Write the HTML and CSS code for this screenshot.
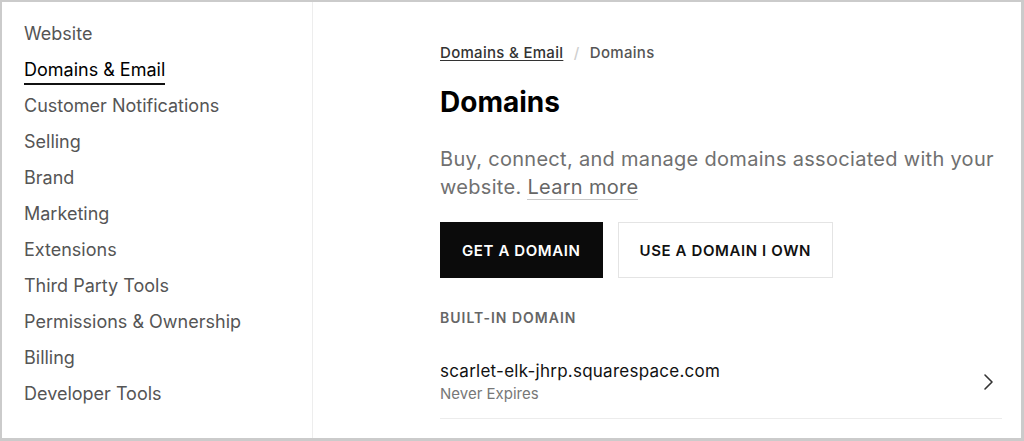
FILE: index.html
```html
<!DOCTYPE html>
<html lang="en">

<head>
  <meta charset="UTF-8" />
  <title>Domains</title>
  <link rel="stylesheet" href="styles.css">
</head>

<body>
  <div class="frame">
    <nav class="sidebar">
      <a class="nav-item" href="#">Website</a>
      <a class="nav-item active" href="#"><span>Domains &amp; Email</span></a>
      <a class="nav-item" href="#">Customer Notifications</a>
      <a class="nav-item" href="#">Selling</a>
      <a class="nav-item" href="#">Brand</a>
      <a class="nav-item" href="#">Marketing</a>
      <a class="nav-item" href="#">Extensions</a>
      <a class="nav-item" href="#">Third Party Tools</a>
      <a class="nav-item" href="#">Permissions &amp; Ownership</a>
      <a class="nav-item" href="#">Billing</a>
      <a class="nav-item" href="#">Developer Tools</a>
    </nav>

    <main class="content">
      <div class="breadcrumb">
        <a href="#" class="crumb-link">Domains &amp; Email</a>
        <span class="crumb-sep">/</span>
        <span class="crumb-current">Domains</span>
      </div>

      <h1 class="title">Domains</h1>

      <p class="intro">Buy, connect, and manage domains associated with your website. <a href="#" class="learn">Learn more</a></p>

      <div class="actions">
        <button class="button button-dark">GET A DOMAIN</button>
        <button class="button button-light">USE A DOMAIN I OWN</button>
      </div>

      <div class="section-label">BUILT-IN DOMAIN</div>

      <div class="domain-row">
        <div class="domain-info">
          <div class="domain-name">scarlet-elk-jhrp.squarespace.com</div>
          <div class="domain-meta">Never Expires</div>
        </div>
        <svg class="chevron" width="24" height="24" viewBox="0 0 24 24" fill="none">
          <path d="M9 5l7 7-7 7" stroke="#333" stroke-width="1.6" stroke-linecap="round" stroke-linejoin="round" />
        </svg>
      </div>
    </main>
  </div>
</body>

</html>
```

FILE: styles.css
```css
* {
  box-sizing: border-box;
}

body {
  margin: 0;
  background-color: #ffffff;
  font-family: "Inter", "Liberation Sans", sans-serif;
  color: #000;
}

.frame {
  display: flex;
  height: 100vh;
  border-style: solid;
  border-color: #cbcbcb;
  border-width: 2px 3px 3px 2px;
}

.sidebar {
  width: 311px;
  flex-shrink: 0;
  padding: 14px 0 0 22px;
  border-right: 1px solid #ededed;
  display: flex;
  flex-direction: column;
}

.nav-item {
  font-size: 18px;
  line-height: 36px;
  color: #555;
  text-decoration: none;
}

.nav-item.active {
  color: #000;
}

.nav-item.active span {
  padding-bottom: 3px;
  border-bottom: 2px solid #111;
}

.content {
  flex: 1;
  padding: 41px 19px 0 127px;
}

.breadcrumb {
  font-size: 15px;
  line-height: 20px;
  font-weight: 500;
  letter-spacing: 0.3px;
  color: #555;
}

.crumb-link {
  color: #333;
  text-decoration: underline;
  text-underline-offset: 2px;
}

.crumb-sep {
  color: #cfcfcf;
  margin: 0 6px;
}

.title {
  margin: 22px 0 0;
  font-size: 28px;
  line-height: 34px;
  font-weight: 700;
  color: #000;
}

.intro {
  margin: 26px 0 0;
  font-size: 20px;
  line-height: 28px;
  letter-spacing: 0.3px;
  color: #707070;
}

.learn {
  color: #666;
  text-decoration: none;
  border-bottom: 1px solid #c8c8c8;
}

.actions {
  display: flex;
  gap: 15px;
  margin-top: 21px;
}

.button {
  height: 56px;
  padding: 0 21px;
  font-family: "Inter", "Liberation Sans", sans-serif;
  font-size: 15px;
  font-weight: 600;
  letter-spacing: 0.6px;
  cursor: pointer;
}

.button-dark {
  background: #0b0b0b;
  border: 1px solid #0b0b0b;
  color: #fff;
}

.button-light {
  background: #fff;
  border: 1px solid #e4e4e4;
  color: #111;
}

.section-label {
  margin-top: 30px;
  font-size: 14px;
  line-height: 20px;
  font-weight: 600;
  letter-spacing: 1px;
  color: #666;
}

.domain-row {
  display: flex;
  align-items: center;
  justify-content: space-between;
  padding: 31px 2px 13px 0;
  border-bottom: 1px solid #ececec;
}

.domain-name {
  font-size: 17px;
  line-height: 24px;
  letter-spacing: 0.25px;
  color: #111;
}

.domain-meta {
  font-size: 15px;
  line-height: 22px;
  color: #777;
}
```
